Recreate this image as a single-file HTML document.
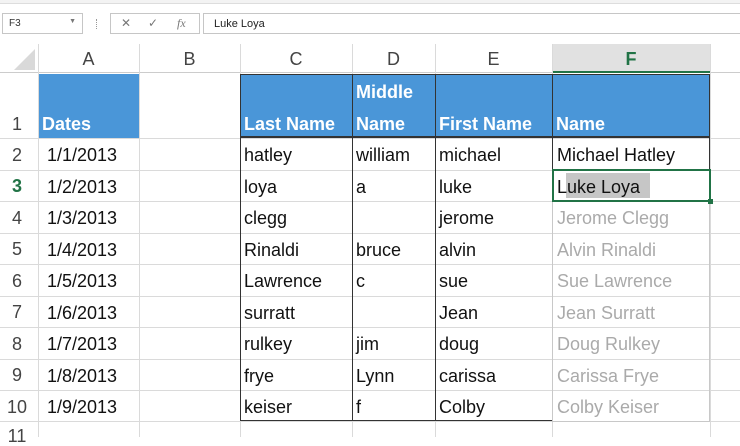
<!DOCTYPE html><html><head><style>
body{margin:0;width:740px;height:437px;overflow:hidden;background:#fff;font-family:"Liberation Sans",sans-serif;position:relative}
.a{position:absolute;box-sizing:border-box}
.t{position:absolute;font-size:18px;color:#111;white-space:nowrap;line-height:20px}
.g{color:#aaa}
.h{position:absolute;font-size:18px;color:#444;text-align:center;line-height:20px}
.c0{left:47px}.c1{left:244px}.c2{left:356px}.c3{left:439px}.c4{left:557px}
</style></head><body>
<div class="a" style="left:0;top:0;width:740px;height:4px;background:#f3f3f3;border-bottom:1px solid #ddd"></div>
<div class="a" style="left:2px;top:13px;width:81px;height:21px;border:1px solid #c6c6c6;font-size:10px;padding:4px 6px;color:#333">F3<span style="position:absolute;right:6px;top:4px;font-size:7px;color:#777">▼</span></div>
<div class="a" style="left:96px;top:19px;width:1px;height:10px;border-left:1px dotted #999"></div>
<div class="a" style="left:110px;top:13px;width:90px;height:21px;border:1px solid #c6c6c6;font-size:12px;color:#777"><span style="position:absolute;left:10px;top:2px">✕</span><span style="position:absolute;left:37px;top:2px">✓</span><span style="position:absolute;left:66px;top:2px;font-style:italic;font-family:'Liberation Serif',serif">fx</span></div>
<div class="a" style="left:203px;top:13px;width:540px;height:21px;border:1px solid #c6c6c6;font-size:11px;padding:4px 10px;color:#222">Luke Loya</div>
<div class="a" style="left:0;top:44px;width:740px;height:29px;background:#fff;border-bottom:1px solid #ccc"></div>
<svg class="a" style="left:12px;top:47px" width="24" height="24"><polygon points="23,2 23,23 2,23" fill="#d9d9d9"/></svg>
<div class="a" style="left:552px;top:44px;width:158px;height:29px;background:#e1e1e1;border-bottom:2px solid #217346"></div>
<div class="h" style="left:38px;top:49px;width:101px">A</div>
<div class="h" style="left:139px;top:49px;width:101px">B</div>
<div class="h" style="left:240px;top:49px;width:112px">C</div>
<div class="h" style="left:352px;top:49px;width:83px">D</div>
<div class="h" style="left:435px;top:49px;width:117px">E</div>
<div class="h" style="left:552px;top:49px;width:158px;color:#217346;font-weight:bold">F</div>
<svg class="a" style="left:0;top:44px" width="740" height="393">
<g stroke="#dadada" stroke-width="1">
<line x1="38.5" y1="0" x2="38.5" y2="393"/><line x1="139.5" y1="0" x2="139.5" y2="393"/><line x1="240.5" y1="0" x2="240.5" y2="393"/><line x1="352.5" y1="0" x2="352.5" y2="393"/><line x1="435.5" y1="0" x2="435.5" y2="393"/><line x1="552.5" y1="0" x2="552.5" y2="393"/><line x1="710.5" y1="0" x2="710.5" y2="393"/>
<line x1="0" y1="94.5" x2="740" y2="94.5"/><line x1="0" y1="126.5" x2="740" y2="126.5"/><line x1="0" y1="157.5" x2="740" y2="157.5"/><line x1="0" y1="189.5" x2="740" y2="189.5"/><line x1="0" y1="220.5" x2="740" y2="220.5"/><line x1="0" y1="252.5" x2="740" y2="252.5"/><line x1="0" y1="283.5" x2="740" y2="283.5"/><line x1="0" y1="315.5" x2="740" y2="315.5"/><line x1="0" y1="346.5" x2="740" y2="346.5"/><line x1="0" y1="377.5" x2="740" y2="377.5"/>
</g></svg>
<div class="a" style="left:39px;top:74px;width:100px;height:64px;background:#4a96d8"></div>
<div class="a" style="left:240px;top:74px;width:470px;height:64px;background:#4a96d8;border:1px solid #333;border-bottom-width:2px"></div>
<div class="a" style="left:352px;top:74px;width:1px;height:347px;background:#333"></div>
<div class="a" style="left:435px;top:74px;width:1px;height:347px;background:#333"></div>
<div class="a" style="left:552px;top:74px;width:1px;height:96px;background:#333"></div>
<div class="a" style="left:240px;top:74px;width:1px;height:347px;background:#333"></div>
<div class="a" style="left:240px;top:420px;width:313px;height:1px;background:#333"></div>
<div class="a" style="left:709px;top:74px;width:1px;height:96px;background:#333"></div>
<div class="a" style="left:552px;top:201px;width:158px;height:221px;border:1px solid #c8c8c8;border-top:none"></div>
<div class="t" style="left:42px;top:114px;color:#fff;font-weight:bold">Dates</div>
<div class="t" style="left:244px;top:114px;color:#fff;font-weight:bold">Last Name</div>
<div class="t" style="left:356px;top:82px;color:#fff;font-weight:bold">Middle</div>
<div class="t" style="left:356px;top:114px;color:#fff;font-weight:bold">Name</div>
<div class="t" style="left:439px;top:114px;color:#fff;font-weight:bold">First Name</div>
<div class="t" style="left:556px;top:114px;color:#fff;font-weight:bold">Name</div>
<div class="h" style="left:0;top:114px;width:34px">1</div>
<div class="h" style="left:0;top:145px;width:34px">2</div>
<div class="h" style="left:0;top:176px;width:34px;color:#217346;font-weight:bold">3</div>
<div class="h" style="left:0;top:208px;width:34px">4</div>
<div class="h" style="left:0;top:239px;width:34px">5</div>
<div class="h" style="left:0;top:271px;width:34px">6</div>
<div class="h" style="left:0;top:302px;width:34px">7</div>
<div class="h" style="left:0;top:334px;width:34px">8</div>
<div class="h" style="left:0;top:365px;width:34px">9</div>
<div class="h" style="left:0;top:397px;width:34px">10</div>
<div class="h" style="left:0;top:426px;width:34px">11</div>
<div class="a" style="left:552px;top:169px;width:159px;height:33px;border:2px solid #217346"></div>
<div class="a" style="left:566px;top:173px;width:84px;height:25px;background:#c6c6c6"></div>
<div class="a" style="left:708px;top:199px;width:5px;height:5px;background:#217346"></div>

<div class="t c0" style="top:145px">1/1/2013</div><div class="t c1" style="top:145px">hatley</div><div class="t c2" style="top:145px">william</div><div class="t c3" style="top:145px">michael</div><div class="t c4" style="top:145px">Michael Hatley</div>
<div class="t c0" style="top:176.5px">1/2/2013</div><div class="t c1" style="top:176.5px">loya</div><div class="t c2" style="top:176.5px">a</div><div class="t c3" style="top:176.5px">luke</div><div class="t c4" style="top:176.5px">Luke Loya</div>
<div class="t c0" style="top:208px">1/3/2013</div><div class="t c1" style="top:208px">clegg</div><div class="t c3" style="top:208px">jerome</div><div class="t c4 g" style="top:208px">Jerome Clegg</div>
<div class="t c0" style="top:239.5px">1/4/2013</div><div class="t c1" style="top:239.5px">Rinaldi</div><div class="t c2" style="top:239.5px">bruce</div><div class="t c3" style="top:239.5px">alvin</div><div class="t c4 g" style="top:239.5px">Alvin Rinaldi</div>
<div class="t c0" style="top:271px">1/5/2013</div><div class="t c1" style="top:271px">Lawrence</div><div class="t c2" style="top:271px">c</div><div class="t c3" style="top:271px">sue</div><div class="t c4 g" style="top:271px">Sue Lawrence</div>
<div class="t c0" style="top:302.5px">1/6/2013</div><div class="t c1" style="top:302.5px">surratt</div><div class="t c3" style="top:302.5px">Jean</div><div class="t c4 g" style="top:302.5px">Jean Surratt</div>
<div class="t c0" style="top:334px">1/7/2013</div><div class="t c1" style="top:334px">rulkey</div><div class="t c2" style="top:334px">jim</div><div class="t c3" style="top:334px">doug</div><div class="t c4 g" style="top:334px">Doug Rulkey</div>
<div class="t c0" style="top:365.5px">1/8/2013</div><div class="t c1" style="top:365.5px">frye</div><div class="t c2" style="top:365.5px">Lynn</div><div class="t c3" style="top:365.5px">carissa</div><div class="t c4 g" style="top:365.5px">Carissa Frye</div>
<div class="t c0" style="top:397px">1/9/2013</div><div class="t c1" style="top:397px">keiser</div><div class="t c2" style="top:397px">f</div><div class="t c3" style="top:397px">Colby</div><div class="t c4 g" style="top:397px">Colby Keiser</div>
</body></html>
